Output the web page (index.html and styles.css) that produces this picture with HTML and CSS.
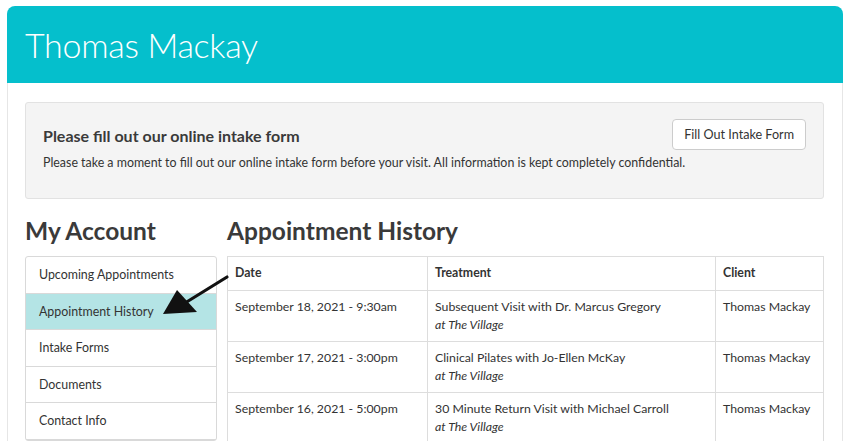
FILE: index.html
```html
<!DOCTYPE html>
<html lang="en">

<head>
  <meta charset="UTF-8" />
  <meta name="viewport" content="width=device-width, initial-scale=1.0" />
  <title>Thomas Mackay</title>
  <link rel="stylesheet" href="styles.css">
</head>

<body>
  <div class="card">
    <!-- Header -->
    <div class="card-header">
      <h1>Thomas Mackay</h1>
    </div>

    <div class="card-body">
      <!-- Intake notice -->
      <div class="intake">
        <button class="btn">Fill Out Intake Form</button>
        <h3>Please fill out our online intake form</h3>
        <p>Please take a moment to fill out our online intake form before your visit. All information is kept completely confidential.</p>
      </div>

      <div class="columns">
        <!-- Account menu -->
        <div class="sidebar">
          <h2>My Account</h2>
          <ul class="menu">
            <li>Upcoming Appointments</li>
            <li class="active">Appointment History</li>
            <li>Intake Forms</li>
            <li>Documents</li>
            <li>Contact Info</li>
          </ul>
        </div>

        <!-- History table -->
        <div class="main">
          <h2>Appointment History</h2>
          <table>
            <tr>
              <th class="col-date">Date</th>
              <th class="col-treat">Treatment</th>
              <th>Client</th>
            </tr>
            <tr>
              <td>September 18, 2021 - 9:30am</td>
              <td>Subsequent Visit with Dr. Marcus Gregory<br><em>at The Village</em></td>
              <td>Thomas Mackay</td>
            </tr>
            <tr>
              <td>September 17, 2021 - 3:00pm</td>
              <td>Clinical Pilates with Jo-Ellen McKay<br><em>at The Village</em></td>
              <td>Thomas Mackay</td>
            </tr>
            <tr>
              <td>September 16, 2021 - 5:00pm</td>
              <td>30 Minute Return Visit with Michael Carroll<br><em>at The Village</em></td>
              <td>Thomas Mackay</td>
            </tr>
          </table>
        </div>
      </div>
    </div>
  </div>

  <!-- Pointer arrow -->
  <svg class="arrow" width="80" height="50" viewBox="0 0 80 50">
    <path d="M69 5 L27 31" stroke="#111" stroke-width="3.2" stroke-linecap="round" />
    <polygon points="5,42 19,18 39,40" fill="#111" />
  </svg>
</body>

</html>
```

FILE: styles.css
```css
body {
  margin: 0;
  padding: 6px 7px 0 7px;
  background: #ffffff;
  font-family: 'Lato', 'Open Sans', sans-serif;
  color: #333333;
}

/* Card */
.card {
  border-radius: 8px 8px 0 0;
  overflow: hidden;
}

.card-header {
  background: #05bfcc;
  height: 77px;
  padding: 0 18px;
  display: flex;
  align-items: center;
}

.card-header h1 {
  margin: 0;
  color: #ffffff;
  font-weight: 300;
  font-size: 34px;
  letter-spacing: -0.3px;
}

.card-body {
  border-left: 1px solid #e6e6e6;
  border-right: 1px solid #e6e6e6;
  padding: 19px 18px 20px 17px;
}

/* Intake notice */
.intake {
  background: #f4f4f4;
  border: 1px solid #e2e2e2;
  border-radius: 3px;
  padding: 16px 17px 28px 17px;
}

.intake h3 {
  margin: 7px 0 10px 0;
  font-size: 16px;
  font-weight: 700;
  color: #3a3a3a;
}

.intake p {
  margin: 0;
  font-size: 12.4px;
  color: #333333;
}

.btn {
  float: right;
  background: #ffffff;
  border: 1px solid #cccccc;
  border-radius: 4px;
  height: 31px;
  padding: 0 11px;
  font-family: inherit;
  font-size: 12.6px;
  color: #333333;
  white-space: nowrap;
}

/* Columns */
.columns {
  display: flex;
  gap: 10px;
  margin-top: 19px;
}

.sidebar {
  width: 192px;
  flex-shrink: 0;
}

.main {
  flex: 1;
}

h2 {
  margin: 0 0 12px 0;
  font-size: 24.5px;
  font-weight: 700;
  color: #3a3a3a;
  line-height: 26px;
}

.menu {
  list-style: none;
  margin: 0;
  padding: 0;
  border: 1px solid #d9d9d9;
  border-radius: 3px;
}

.menu li {
  height: 35.6px;
  line-height: 35.6px;
  padding-left: 13px;
  font-size: 12.4px;
  border-bottom: 1px solid #d9d9d9;
}

.menu li.active {
  background: #b4e4e5;
}

table {
  width: 100%;
  border-collapse: collapse;
  font-size: 12.3px;
}

th,
td {
  border: 1px solid #dddddd;
  text-align: left;
  vertical-align: top;
}

th {
  font-weight: 700;
  height: 17px;
  padding: 8px 7px;
}

td {
  line-height: 18px;
  height: 36px;
  padding: 7px 7px;
}

.col-date {
  width: 185px;
}

.col-treat {
  width: 273px;
}

/* Arrow overlay */
.arrow {
  position: absolute;
  left: 158px;
  top: 272px;
}
```
